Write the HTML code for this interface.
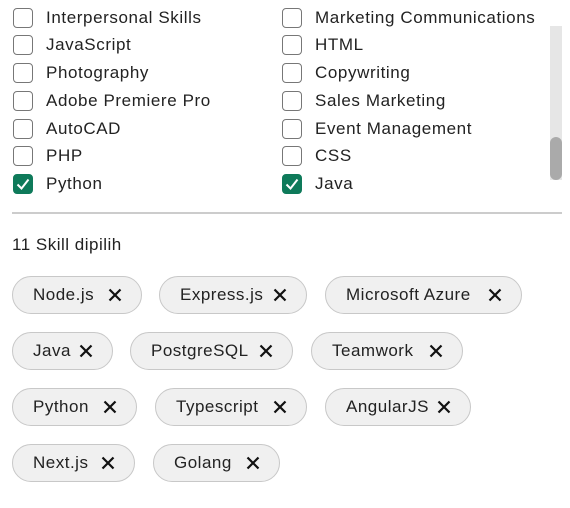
<!DOCTYPE html><html><head><style>
body{margin:0;width:570px;height:508px;background:#fff;font-family:"Liberation Sans",sans-serif;color:#222;position:relative;overflow:hidden}
.r{position:absolute;height:24px;display:flex;align-items:center;font-size:17px;letter-spacing:0.6px}
.cb{width:20px;height:20px;border:1.3px solid #777;border-radius:4px;margin-right:13px;box-sizing:border-box;flex:none}
.ck{background:#0e7a5a;border-color:#0e7a5a;display:flex;align-items:center;justify-content:center}
.chip{position:absolute;height:38px;box-sizing:border-box;border:1px solid #c8c8c8;background:#f0f0f0;border-radius:19px;display:flex;align-items:center;justify-content:space-between;padding:0 19px 0 20px;font-size:17px;letter-spacing:0.5px}
.x{width:14px;height:14px}
</style></head><body>
<div style="position:absolute;left:550px;top:26px;width:12px;height:154px;background:#e6e6e6"></div>
<div style="position:absolute;left:550px;top:137px;width:12px;height:43px;background:#aaa;border-radius:6px"></div>
<div id="a"></div>
<div style="position:absolute;left:12px;top:212px;width:550px;height:2px;background:#ccc"></div>
<div style="position:absolute;left:12px;top:235px;font-size:17px;letter-spacing:0.5px">11 Skill dipilih</div>
<script>
var L=["Interpersonal Skills","JavaScript","Photography","Adobe Premiere Pro","AutoCAD","PHP","Python"],R=["Marketing Communications","HTML","Copywriting","Sales Marketing","Event Management","CSS","Java"];
var ys=[18,45,73,101,129,156,184],h="";
var tick='<svg width="14" height="12" viewBox="0 0 14 12"><path d="M1.5 6.5l4 4L12.5 1.5" stroke="#fff" stroke-width="2" fill="none"/></svg>';
for(var i=0;i<7;i++){[[13,L],[282,R]].forEach(function(c){h+='<div class="r" style="left:'+c[0]+'px;top:'+(ys[i]-12)+'px"><div class="cb'+(i==6?' ck':'')+'">'+(i==6?tick:'')+'</div>'+c[1][i]+'</div>';});}
var X='<svg class="x" viewBox="0 0 14 14"><path d="M1.5 1.5L12.5 12.5M12.5 1.5L1.5 12.5" stroke="#111" stroke-width="2.2"/></svg>';
var C=[[276,[["Node.js",12,142],["Express.js",159,307],["Microsoft Azure",325,522]]],[332,[["Java",12,113],["PostgreSQL",130,293],["Teamwork",311,463]]],[388,[["Python",12,137],["Typescript",155,307],["AngularJS",325,471]]],[444,[["Next.js",12,135],["Golang",153,280]]]];
C.forEach(function(r){r[1].forEach(function(c){h+='<div class="chip" style="top:'+r[0]+'px;left:'+c[1]+'px;width:'+(c[2]-c[1])+'px"><span>'+c[0]+'</span>'+X+'</div>';});});
document.getElementById("a").innerHTML=h;
</script>
</body></html>
